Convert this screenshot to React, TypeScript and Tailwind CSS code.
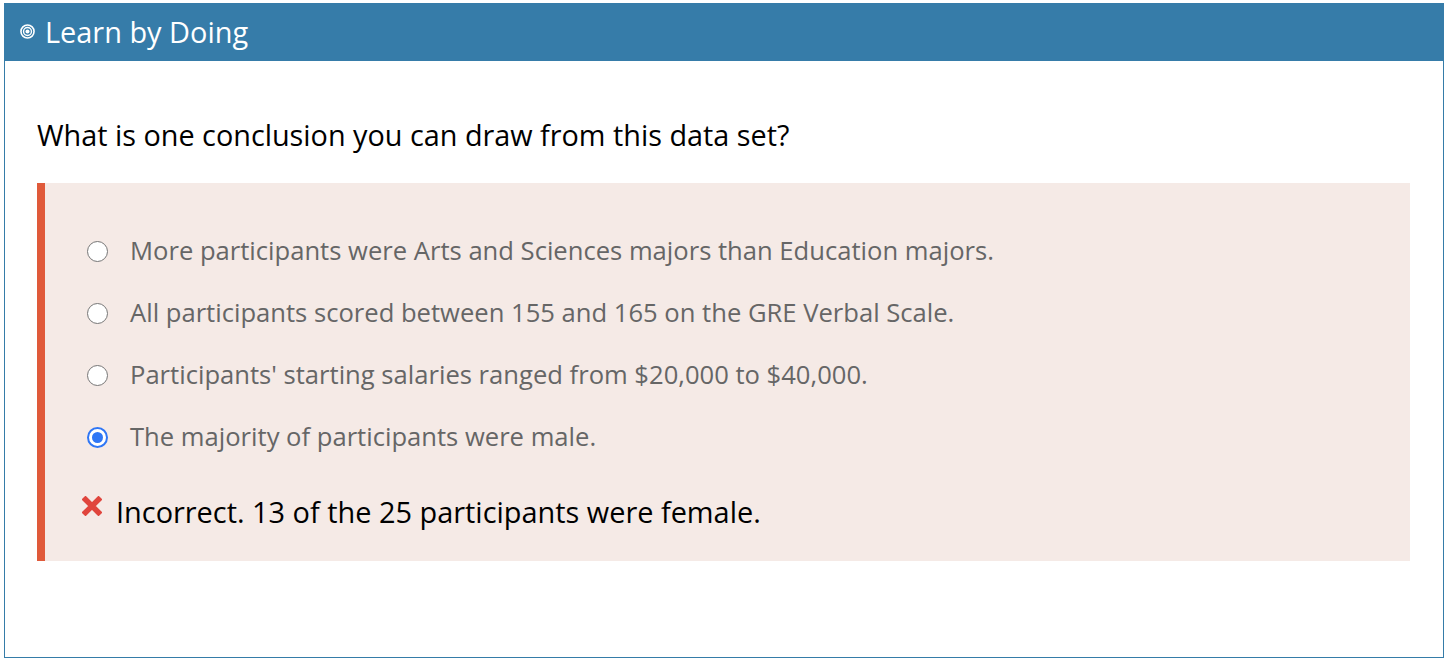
import React from 'react';

const OPTIONS = [
  'More participants were Arts and Sciences majors than Education majors.',
  'All participants scored between 155 and 165 on the GRE Verbal Scale.',
  "Participants' starting salaries ranged from $20,000 to $40,000.",
  'The majority of participants were male.',
];

function Radio({ checked }: { checked: boolean }) {
  if (checked) {
    return (
      <span className="w-[21px] h-[21px] shrink-0 rounded-full border-[2px] border-[#2f76f5] bg-white flex items-center justify-center">
        <span className="w-[11px] h-[11px] rounded-full bg-[#2f76f5]" />
      </span>
    );
  }
  return <span className="w-[21px] h-[21px] shrink-0 rounded-full border-[1.5px] border-[#767676] bg-white" />;
}

export default function App() {
  return (
    <div className="bg-white w-[1448px] h-[662px] pt-[3px] pl-[4px]" style={{ fontFamily: '"Open Sans", sans-serif' }}>
      <div className="w-[1440px] h-[655px] border border-[#357ca8] flex flex-col">
        {/* Header */}
        <div className="h-[58px] bg-[#367ca9] flex items-center pl-[16px] text-white -mt-px -mx-px">
          <svg width="15" height="15" viewBox="0 0 14 14" className="mr-[10px] mt-[-1px]">
            <circle cx="7" cy="7" r="6.1" fill="none" stroke="white" strokeWidth="1.5" />
            <circle cx="7" cy="7" r="3.7" fill="none" stroke="white" strokeWidth="1.3" />
            <circle cx="7" cy="7" r="1.9" fill="white" />
          </svg>
          <span className="text-[28.9px] leading-none">Learn by Doing</span>
        </div>

        <div className="pl-[32px] pr-[32px]">
          <p className="text-[28.8px] text-black leading-[36px] mt-[56px]">
            What is one conclusion you can draw from this data set?
          </p>

          <div className="mt-[30px] w-[1373px] h-[378px] bg-[#f5eae6] border-l-[8px] border-[#e05a3a] pt-[37px]">
            {OPTIONS.map((o, i) => (
              <div key={i} className="h-[62px] flex items-center pl-[42px]">
                <Radio checked={i === 3} />
                <span className="text-[25.6px] text-[#666666] ml-[22px]">{o}</span>
              </div>
            ))}
            <div className="flex items-center pl-[37px] mt-[26px]">
              <svg width="20" height="20" viewBox="0 0 20 20" className="self-start mt-[2px]">
                <path d="M3.5 3.5 L16.5 16.5 M16.5 3.5 L3.5 16.5" stroke="#e0453d" strokeWidth="5.5" strokeLinecap="square" />
              </svg>
              <span className="ml-[14px] text-[28.9px] text-black leading-[36px]">
                Incorrect. 13 of the 25 participants were female.
              </span>
            </div>
          </div>
        </div>
      </div>
    </div>
  );
}
